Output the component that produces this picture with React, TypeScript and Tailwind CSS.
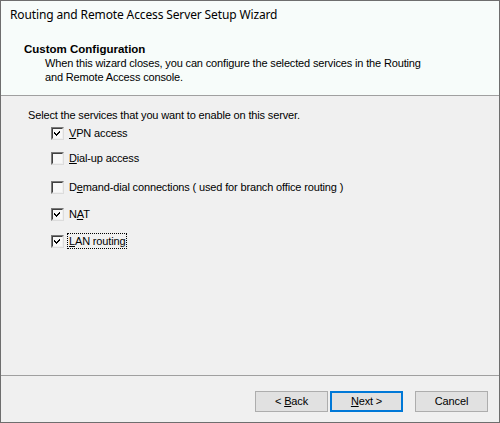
import React from "react";

function Check({ checked }: { checked: boolean }) {
  return (
    <span className="inline-block w-[13px] h-[13px] border border-t-[#7a7a7a] border-l-[#7a7a7a] border-r-[#dcdcdc] border-b-[#dcdcdc] bg-white relative shrink-0">
      <span className="absolute inset-0 border border-t-[#404040] border-l-[#404040] border-r-[#f0f0f0] border-b-[#f0f0f0] bg-[#f8f8f8]" />
      {checked && (
        <svg className="absolute left-[1px] top-[1px]" width="9" height="9" viewBox="0 0 9 9">
          <path d="M1 3 L3 5 L7 1 L7 3 L3 7 L1 5 Z" fill="#000" shapeRendering="crispEdges" />
        </svg>
      )}
    </span>
  );
}

function Item({ checked, children, mt, focus }: { checked: boolean; children: React.ReactNode; mt: string; focus?: boolean }) {
  return (
    <div className={`flex items-center gap-[4px] ${mt}`}>
      <Check checked={checked} />
      <span className={focus ? "outline outline-1 outline-dotted outline-black px-[1px] leading-[14px]" : "px-[1px] leading-[14px]"}>
        {children}
      </span>
    </div>
  );
}

export default function App() {
  return (
    <div
      className="w-[500px] h-[423px] border border-[#6e6e6e] bg-[#f0f0f0] flex flex-col text-[11px] tracking-[-0.15px] text-black"
      style={{ fontFamily: '"Liberation Sans", Arial, sans-serif' }}
    >
      <div className="h-[95px] bg-[#f7fcfa] border-b border-[#a0a0a0] flex flex-col">
        <div className="pl-[9px] pt-[6px] text-[12px] leading-[16px] tracking-[-0.13px]" style={{ fontFamily: '"Noto Sans", sans-serif' }}>
          Routing and Remote Access Server Setup Wizard
        </div>
        <div className="pl-[23px] pt-[19px] font-bold text-[11.5px] leading-[14px] tracking-normal">
          Custom Configuration
        </div>
        <div className="pl-[44px] leading-[14px]">
          When this wizard closes, you can configure the selected services in the Routing
          <br />
          and Remote Access console.
        </div>
      </div>
      <div className="flex-1 flex flex-col pl-[27px] pt-[12px]">
        <div className="leading-[14px]">Select the services that you want to enable on this server.</div>
        <div className="pl-[23px] flex flex-col">
          <Item checked mt="mt-[4px]">
            <u>V</u>PN access
          </Item>
          <Item checked={false} mt="mt-[11px]">
            <u>D</u>ial-up access
          </Item>
          <Item checked={false} mt="mt-[15px]">
            D<u>e</u>mand-dial connections ( used for branch office routing )
          </Item>
          <Item checked mt="mt-[13px]">
            N<u>A</u>T
          </Item>
          <Item checked mt="mt-[13px]" focus>
            <u>L</u>AN routing
          </Item>
        </div>
      </div>
      <div className="h-[47px] border-t border-[#a0a0a0] flex items-start pt-[15px] pl-[254px]">
        <button className="w-[73px] h-[21px] bg-[#e1e1e1] border border-[#adadad] leading-[19px]">
          &lt; <u>B</u>ack
        </button>
        <button className="w-[73px] h-[21px] ml-[2px] bg-[#e1e1e1] border-2 border-[#0078d7] leading-[17px]">
          <u>N</u>ext &gt;
        </button>
        <button className="w-[73px] h-[21px] ml-[12px] bg-[#e1e1e1] border border-[#adadad] leading-[19px]">
          Cancel
        </button>
      </div>
    </div>
  );
}
